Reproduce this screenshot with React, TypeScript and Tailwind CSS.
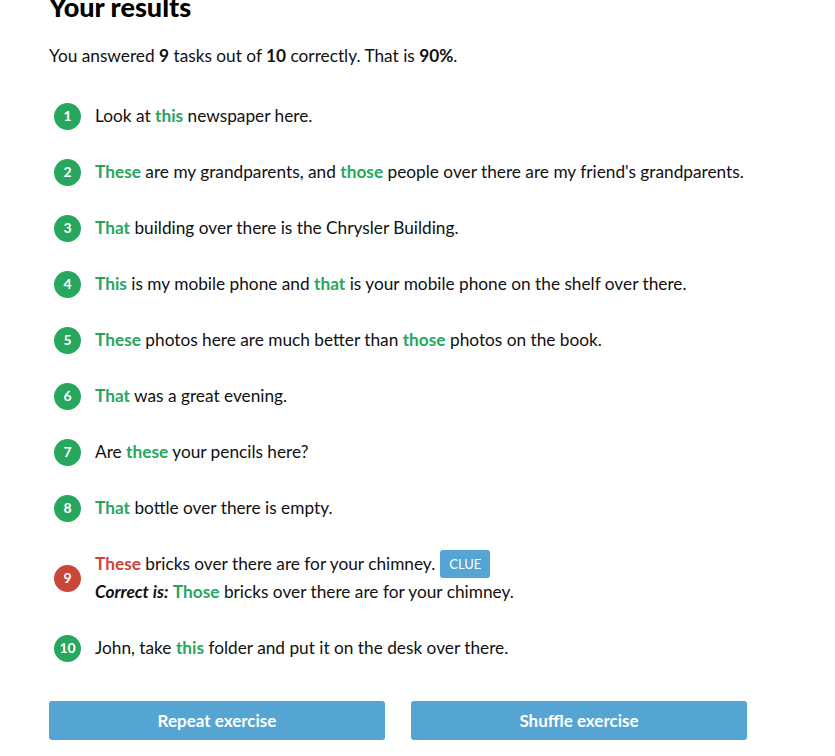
const G = 'font-bold text-[#27a75e]';

type Item = { n: number; body: React.ReactNode; wrong?: React.ReactNode };

const items: Item[] = [
  { n: 1, body: <>Look at <b className={G}>this</b> newspaper here.</> },
  { n: 2, body: <><b className={G}>These</b> are my grandparents, and <b className={G}>those</b> people over there are my friend's grandparents.</> },
  { n: 3, body: <><b className={G}>That</b> building over there is the Chrysler Building.</> },
  { n: 4, body: <><b className={G}>This</b> is my mobile phone and <b className={G}>that</b> is your mobile phone on the shelf over there.</> },
  { n: 5, body: <><b className={G}>These</b> photos here are much better than <b className={G}>those</b> photos on the book.</> },
  { n: 6, body: <><b className={G}>That</b> was a great evening.</> },
  { n: 7, body: <>Are <b className={G}>these</b> your pencils here?</> },
  { n: 8, body: <><b className={G}>That</b> bottle over there is empty.</> },
  {
    n: 9,
    wrong: (
      <>
        <div className="flex items-center">
          <span><b className="font-bold text-[#c9473a]">These</b> bricks over there are for your chimney.</span>
          <span className="ml-[5px] rounded-[3px] bg-[#54a5d3] px-[9px] py-[4px] text-[13px] leading-[20px] text-white">CLUE</span>
        </div>
        <div>
          <b className="font-bold italic">Correct is:</b> <b className={G}>Those</b> bricks over there are for your chimney.
        </div>
      </>
    ),
    body: null,
  },
  { n: 10, body: <>John, take <b className={G}>this</b> folder and put it on the desk over there.</> },
];

export default function App() {
  return (
    <div className="h-[756px] overflow-hidden bg-white pl-[49px] text-[17.25px] leading-[28px] text-[#111] font-['Lato','Liberation_Sans',sans-serif]">
      <h2 className="-mt-[10px] text-[27px] font-black leading-[34px] text-black">Your results</h2>
      <p className="mt-[18px]">
        You answered <b className="font-bold">9</b> tasks out of <b className="font-bold">10</b> correctly. That is <b className="font-bold">90%</b>.
      </p>
      <div className="mt-[32px] flex flex-col gap-[28px]">
        {items.map((it) => (
          <div key={it.n} className="flex items-center">
            <div
              className={`ml-[5px] flex h-[27px] w-[27px] shrink-0 items-center justify-center rounded-full text-[14px] font-bold text-white ${
                it.wrong ? 'bg-[#c9473a]' : 'bg-[#27a75e]'
              }`}
            >
              {it.n}
            </div>
            <div className="ml-[14px]">{it.wrong ?? it.body}</div>
          </div>
        ))}
      </div>
      <div className="mt-[39px] flex w-[698px] gap-[26px]">
        <button className="h-[39px] flex-1 rounded-[3px] bg-[#54a5d3] text-[17px] font-bold text-white">Repeat exercise</button>
        <button className="h-[39px] flex-1 rounded-[3px] bg-[#54a5d3] text-[17px] font-bold text-white">Shuffle exercise</button>
      </div>
    </div>
  );
}
